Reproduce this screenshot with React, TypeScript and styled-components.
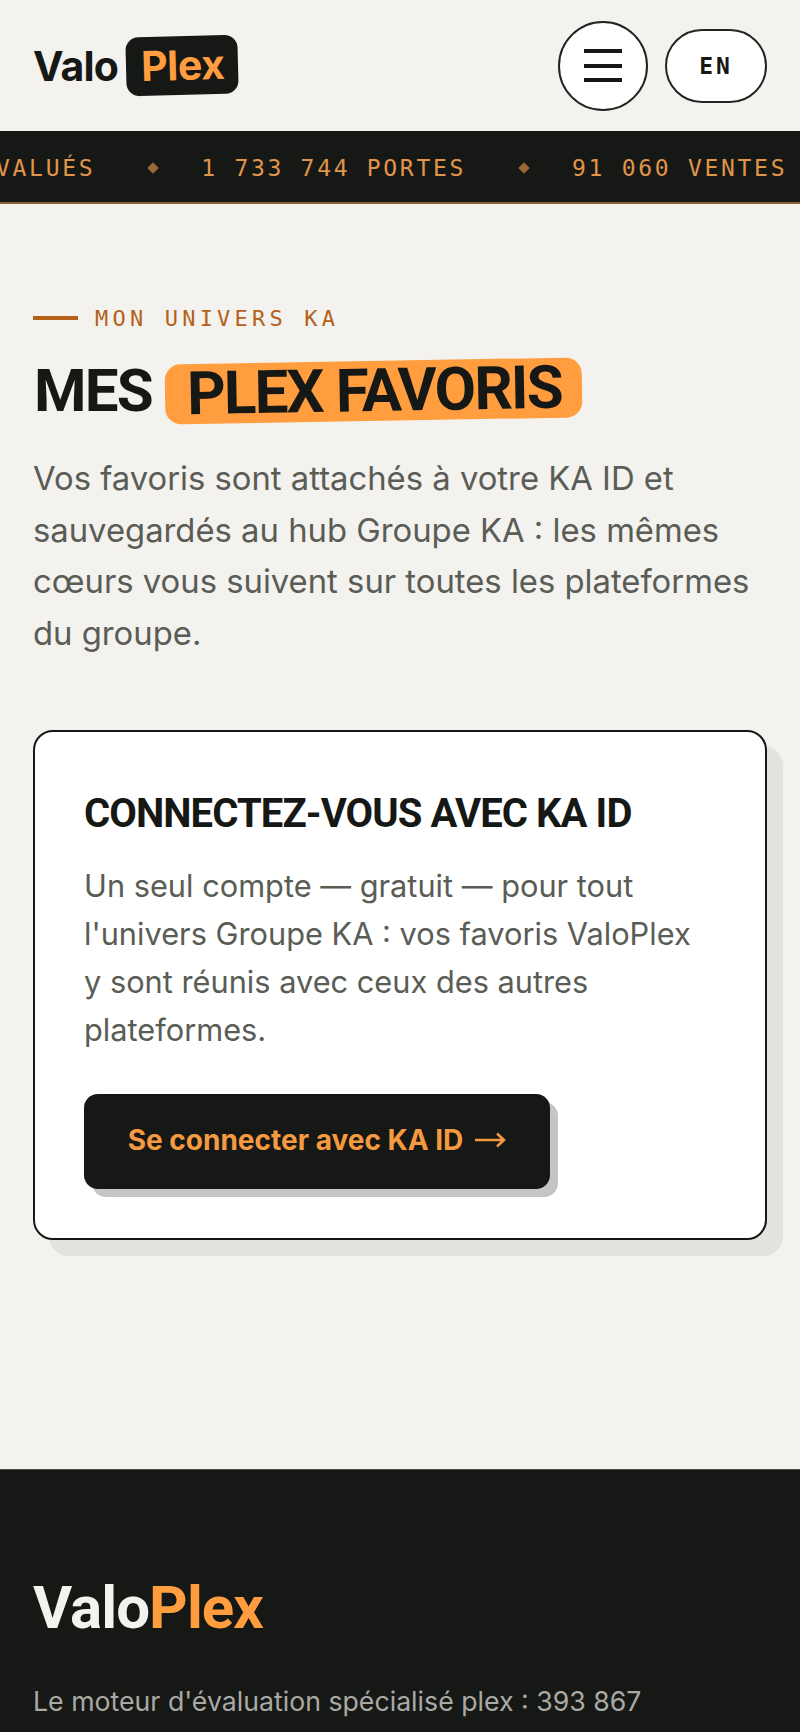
import React from "react";
import styled, { createGlobalStyle } from "styled-components";

const Global = createGlobalStyle`
  html, body { margin: 0; padding: 0; background: #f3f2ee; }
  * { box-sizing: border-box; }
  #root { width: 800px; }
`;

const mono = `"DejaVu Sans Mono", "Liberation Mono", monospace`;
const grotesk = `Roboto, "Liberation Sans", Arial, sans-serif`;
const body = `Inter, "Noto Sans", sans-serif`;

const Page = styled.div`
  width: 800px;
  height: 1732px;
  overflow: hidden;
  display: flex;
  flex-direction: column;
  background: #f3f2ee;
  color: #161815;
  font-family: ${body};
`;

const Header = styled.header`
  height: 131px;
  flex: none;
  display: flex;
  align-items: center;
  justify-content: space-between;
  padding: 0 33px 0 33px;
`;

const Logo = styled.a`
  display: flex;
  align-items: center;
  gap: 8px;
  font-family: ${body};
  font-weight: 700;
  font-size: 41px;
  letter-spacing: -0.8px;
  color: #161815;
`;

const LogoTag = styled.span`
  display: block;
  background: #161815;
  color: #ff9d3f;
  border-radius: 13px;
  padding: 5px 14px 6px 15px;
  line-height: 48px;
  letter-spacing: -0.4px;
  transform: rotate(-1.5deg);
`;

const Controls = styled.div`
  display: flex;
  align-items: center;
  gap: 17px;
`;

const Burger = styled.button`
  width: 90px;
  height: 90px;
  border-radius: 50%;
  border: 2px solid #222420;
  background: #fff;
  display: flex;
  flex-direction: column;
  align-items: center;
  justify-content: center;
  gap: 10.5px;
  padding: 0;
`;

const BurgerLine = styled.span`
  display: block;
  width: 38px;
  height: 4px;
  background: #161815;
`;

const Lang = styled.button`
  width: 102px;
  height: 74px;
  border-radius: 37px;
  border: 2px solid #222420;
  background: #fff;
  color: #161815;
  font-family: ${mono};
  font-weight: 700;
  font-size: 23px;
  letter-spacing: 3px;
  padding: 0;
`;

const Ticker = styled.div`
  height: 73px;
  flex: none;
  background: #161815;
  border-bottom: 2px solid #8a6238;
  padding-top: 2px;
  overflow: hidden;
  display: flex;
  align-items: center;
`;

const Track = styled.div`
  display: flex;
  align-items: center;
  gap: 49px;
  white-space: nowrap;
  flex: none;
  transform: translateX(-4px);
  font-family: ${mono};
  font-size: 23px;
  letter-spacing: 2.7px;
  color: #e0954a;
`;

const Diamond = styled.span`
  display: block;
  flex: none;
  width: 8px;
  height: 8px;
  margin: 0 -5px 0 5px;
  background: #9a6a35;
  transform: rotate(45deg);
`;

const Main = styled.main`
  flex: 1;
  padding: 97px 33px 0;
`;

const Eyebrow = styled.div`
  display: flex;
  align-items: center;
  gap: 17px;
  height: 34px;
  font-family: ${mono};
  font-size: 22px;
  letter-spacing: 4.2px;
  color: #b5611a;
`;

const EyebrowRule = styled.span`
  display: block;
  width: 45px;
  height: 4px;
  background: #b5611a;
`;

const Title = styled.h1`
  margin: 26px 0 0;
  padding-left: 1px;
  display: flex;
  align-items: center;
  gap: 13px;
  font-family: ${grotesk};
  font-weight: 700;
  font-size: 60px;
  line-height: 60px;
  letter-spacing: -1.8px;
`;

const Highlight = styled.span`
  display: block;
  background: #ff9d3f;
  border-radius: 16px;
  padding: 0 20px 0 22px;
  transform: rotate(-1deg);
`;

const Lead = styled.p`
  margin: 32px 0 0;
  font-size: 32.8px;
  line-height: 51.6px;
  color: #5a5c56;
`;

const Card = styled.section`
  margin-top: 71px;
  height: 510px;
  background: #fff;
  border: 2px solid #161815;
  border-radius: 20px;
  box-shadow: 16px 16px 0 #e3e3de;
  padding: 60px 56px 0 49px;
`;

const CardTitle = styled.h2`
  margin: 0;
  font-family: ${grotesk};
  font-weight: 700;
  font-size: 40px;
  line-height: 44px;
  letter-spacing: -0.9px;
  white-space: nowrap;
`;

const CardText = styled.p`
  margin: 26px 0 0;
  font-size: 30.75px;
  line-height: 48px;
  color: #5a5c56;
`;

const CardButton = styled.button`
  display: flex;
  align-items: center;
  justify-content: center;
  gap: 11px;
  margin-top: 40px;
  width: 466px;
  height: 95px;
  border: 0;
  border-radius: 14px;
  background: #161815;
  color: #f59a40;
  font-family: ${body};
  font-weight: 700;
  font-size: 28px;
  box-shadow: 8px 8px 0 rgba(22, 24, 21, 0.25);
  padding: 0 0 4px;
`;

const Footer = styled.footer`
  height: 263px;
  flex: none;
  background: #161815;
  border-top: 1px solid #4a4b47;
  padding: 105px 33px 0;
`;

const FooterLogo = styled.div`
  font-family: ${grotesk};
  font-weight: 700;
  font-size: 60px;
  line-height: 66px;
  letter-spacing: -0.9px;
  color: #f3f2ee;
`;

const FooterAccent = styled.span`
  color: #ff9d3f;
`;

const FooterText = styled.p`
  margin: 40px 0 0;
  font-size: 26.7px;
  line-height: 40px;
  color: #a9aaa6;
  white-space: nowrap;
`;

export default function App() {
  return (
    <Page>
      <Global />
      <Header>
        <Logo>
          Valo<LogoTag>Plex</LogoTag>
        </Logo>
        <Controls>
          <Burger aria-label="Menu">
            <BurgerLine />
            <BurgerLine />
            <BurgerLine />
          </Burger>
          <Lang>EN</Lang>
        </Controls>
      </Header>
      <Ticker>
        <Track>
          <span>VALUÉS</span>
          <Diamond />
          <span>1 733 744 PORTES</span>
          <Diamond />
          <span>91 060 VENTES</span>
        </Track>
      </Ticker>
      <Main>
        <Eyebrow>
          <EyebrowRule />
          MON UNIVERS KA
        </Eyebrow>
        <Title>
          MES <Highlight>PLEX FAVORIS</Highlight>
        </Title>
        <Lead>
          Vos favoris sont attachés à votre KA ID et sauvegardés au hub Groupe KA : les mêmes cœurs vous suivent sur toutes les plateformes du groupe.
        </Lead>
        <Card>
          <CardTitle>CONNECTEZ-VOUS AVEC KA ID</CardTitle>
          <CardText>
            Un seul compte — gratuit — pour tout l'univers Groupe KA : vos favoris ValoPlex y sont réunis avec ceux des autres plateformes.
          </CardText>
          <CardButton>
            Se connecter avec KA ID
            <svg width="32" height="16" viewBox="0 0 32 16" fill="none" stroke="currentColor" strokeWidth="2.5" aria-hidden="true">
              <path d="M1 8H30M23 1.5l7 6.5-7 6.5" />
            </svg>
          </CardButton>
        </Card>
      </Main>
      <Footer>
        <FooterLogo>
          Valo<FooterAccent>Plex</FooterAccent>
        </FooterLogo>
        <FooterText>Le moteur d'évaluation spécialisé plex : 393 867</FooterText>
      </Footer>
    </Page>
  );
}
